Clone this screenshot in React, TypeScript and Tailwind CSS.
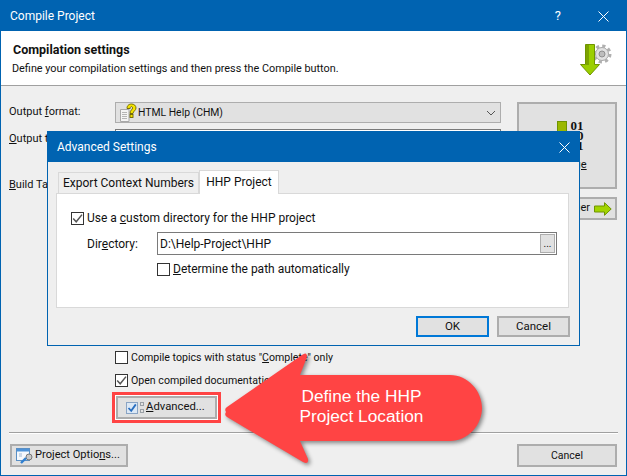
import React from 'react';

const Check = ({ checked = false }: { checked?: boolean }) => (
    <span className="flex h-[13px] w-[13px] shrink-0 items-center justify-center border border-[#333333] bg-white">
        {checked && (
            <svg width="11" height="11" viewBox="0 0 11 11">
                <path d="M1.2 5.6 L4.2 8.8 L10 1.6" fill="none" stroke="#555555" strokeWidth="1.5" />
            </svg>
        )}
    </span>
);

const Close = ({ size = 11 }: { size?: number }) => (
    <svg width={size} height={size} viewBox="0 0 11 11">
        <path d="M0.5 0.5 L10.5 10.5 M10.5 0.5 L0.5 10.5" stroke="#ffffff" strokeWidth="1" />
    </svg>
);

const HelpIcon = () => (
    <svg width="19" height="20" viewBox="0 0 19 20" className="shrink-0">
        <path d="M1.5 6.5 H10 V18.5 H1.5 Z" fill="#f4f4f4" stroke="#a8a8a8" />
        <path d="M3 9.5 H8 M3 11.5 H8 M3 13.5 H8 M3 15.5 H8" stroke="#b5b5b5" />
        <path d="M8 5.5 C8 2 10.5 1 12.5 1 C15 1 17 2.6 17 5 C17 7.6 14.2 8 14 10.5 H11 C11 7 13.6 6.6 13.6 5 C13.6 4 13 3.6 12.4 3.6 C11.6 3.6 11.2 4.4 11.2 5.5 Z" fill="#f5e400" stroke="#6b6200" strokeWidth="0.9" />
        <rect x="11" y="11.5" width="3" height="3" fill="#f5e400" stroke="#6b6200" strokeWidth="0.9" />
    </svg>
);

const CompileIcon = () => (
    <svg width="34" height="34" viewBox="0 0 34 34" className="shrink-0">
        <circle cx="22" cy="10" r="6.5" fill="#e2e2e2" stroke="#a6a6a6" strokeWidth="1" />
        <circle cx="22" cy="10" r="8" fill="none" stroke="#b0b0b0" strokeWidth="3" strokeDasharray="3.2 3.08" />
        <circle cx="22" cy="10" r="3" fill="#bdbdbd" stroke="#8f8f8f" strokeWidth="1" />
        <path d="M5.5 0.5 H14.5 V20.5 H19.5 L10 31 L0.5 20.5 H5.5 Z" fill="#9bcf00" stroke="#6f9400" strokeWidth="1" />
        <rect x="6" y="1" width="3" height="20" fill="#7ca300" />
    </svg>
);

const ArrowRight = () => (
    <svg width="18" height="14" viewBox="0 0 18 14" className="shrink-0">
        <path d="M0.5 4 H10.5 V0.7 L17.2 7 L10.5 13.3 V10 H0.5 Z" fill="#a2d400" stroke="#6f9400" />
    </svg>
);

const AdvancedIcon = () => (
    <svg width="20" height="14" viewBox="0 0 20 14" className="shrink-0">
        <rect x="0.5" y="1.5" width="11" height="11" fill="#dce8f5" stroke="#8aa4c4" />
        <path d="M2.5 7 L5.2 9.8 L9.8 3.4" fill="none" stroke="#2a6fc0" strokeWidth="1.8" />
        <rect x="14.5" y="1.5" width="3" height="3" fill="#e2e2e2" stroke="#9aa0a6" />
        <rect x="14.5" y="8.5" width="3" height="3" fill="#e2e2e2" stroke="#9aa0a6" />
    </svg>
);

const OptionsIcon = () => (
    <svg width="17" height="16" viewBox="0 0 17 16" className="shrink-0">
        <rect x="0.5" y="0.5" width="13" height="12" fill="#f5f8fc" stroke="#5a8fc4" />
        <rect x="1" y="1" width="12" height="2.5" fill="#4f93d8" />
        <path d="M3 6 H6 M3 8 H6" stroke="#9fb8d4" />
        <circle cx="13" cy="9" r="3" fill="#c8c8c8" stroke="#777777" />
        <path d="M5 15 L10 10" stroke="#2f7fd0" strokeWidth="2.4" />
    </svg>
);

const Button = ({ children, className = '' }: { children: React.ReactNode; className?: string }) => (
    <div className={`flex items-center border-2 border-[#adadad] bg-[#e1e1e1] whitespace-nowrap ${className}`}>
        {children}
    </div>
);

const App = () => {
    return (
        <div className="relative flex h-[476px] w-[627px] flex-col overflow-hidden border border-[#0063b1] bg-[#efefef] font-['Roboto',sans-serif] text-[11px] text-[#111111]">
            {/* title bar */}
            <div className="flex h-[30px] shrink-0 items-center bg-[#0063b1] pl-[9px] pr-[17px] text-[12px] text-white">
                <span>Compile Project</span>
                <span className="ml-auto mr-[37px] text-[13px]">?</span>
                <Close />
            </div>

            {/* header */}
            <div className="flex h-[55px] shrink-0 items-start justify-between border-b border-[#a0a0a0] bg-white pl-[12px] pr-[12px]">
                <div>
                    <div className="mt-[10px] text-[12.5px] font-bold leading-[18px]">Compilation settings</div>
                    <div className="-ml-px mt-px text-[10.85px] leading-[18px]">Define your compilation settings and then press the Compile button.</div>
                </div>
                <div className="mt-[13px]">
                    <CompileIcon />
                </div>
            </div>

            {/* form */}
            <div className="flex min-h-0 flex-1 gap-[16px] pl-[8px] pr-[9px] pt-[16px]">
                <div className="flex w-[492px] shrink-0 flex-col">
                    <div className="flex h-[21px] items-center">
                        <span className="w-[106px]">Output <u>f</u>ormat:</span>
                        <div className="flex h-[21px] flex-1 items-center border border-[#adadad] bg-[#e1e1e1] pl-[3px] pr-[3px]">
                            <HelpIcon />
                            <span className="pt-px text-[10.4px]">HTML Help (CHM)</span>
                            <svg width="10" height="6" viewBox="0 0 10 6" className="ml-auto mr-[1px]">
                                <path d="M1 1 L5 5 L9 1" fill="none" stroke="#555555" />
                            </svg>
                        </div>
                    </div>
                    <div className="mt-[6px] flex h-[21px] items-center">
                        <span className="w-[106px]"><u>O</u>utput to:</span>
                        <div className="h-[21px] flex-1 border border-[#7a7a7a] bg-white" />
                    </div>
                    <div className="mt-[25px] flex h-[21px] items-center">
                        <span className="w-[106px]"><u>B</u>uild Tags:</span>
                        <div className="h-[21px] flex-1 border border-[#7a7a7a] bg-white" />
                    </div>

                    <div className="ml-[106px] mt-[155px] flex items-center gap-[3px]">
                        <Check />
                        <span className="text-[10.6px] leading-[13px]">Compile topics with status "<u>C</u>omplete" only</span>
                    </div>
                    <div className="ml-[106px] mt-[10px] flex items-center gap-[3px]">
                        <Check checked />
                        <span className="text-[10.6px] leading-[13px]">Open compiled documentation after compilation</span>
                    </div>
                    <div className="ml-[103px] mt-[5px] h-[31px] w-[109px] border-[3px] border-[#ff4444] bg-white p-px">
                        <Button className="h-full w-full pl-[8px]">
                            <AdvancedIcon />
                            <span className="text-[11.3px]"><u>A</u>dvanced...</span>
                        </Button>
                    </div>
                </div>

                <div className="flex w-[100px] shrink-0 flex-col">
                    <div className="flex h-[87px] flex-col items-center border-2 border-[#adadad] bg-[#e1e1e1] pl-[6px] pt-[17px]">
                        <div className="flex gap-[4px]">
                            <div className="h-[28px] w-[10px] border border-[#6f9400] bg-[#9bb800]" />
                            <div className="font-['Liberation_Serif',serif] text-[13px] font-bold leading-[10px]">
                                01<br />10<br />01
                            </div>
                        </div>
                        <u className="mr-[4px] mt-[6px]">Change</u>
                    </div>
                    <Button className="mt-[8px] h-[23px] justify-end gap-[4px] pr-[3px]">
                        <span>Manager</span>
                        <ArrowRight />
                    </Button>
                </div>
            </div>

            {/* footer */}
            <div className="mx-[8px] shrink-0 border-t border-[#a0a0a0] pb-[8px] pt-[11px] shadow-[inset_0_1px_0_#ffffff]">
                <div className="flex justify-between pl-px pr-px">
                    <Button className="h-[23px] w-[118px] gap-[2px] pl-[4px]">
                        <OptionsIcon />
                        <span className="text-[11.1px]">Project Optio<u>n</u>s...</span>
                    </Button>
                    <Button className="h-[23px] w-[100px] justify-center text-[10.5px]">Cancel</Button>
                </div>
            </div>

            {/* Advanced Settings dialog */}
            <div className="absolute left-[46px] top-[130px] flex h-[215px] w-[533px] flex-col border border-[#0063b1] bg-[#efefef] text-[12px]">
                <div className="flex h-[30px] shrink-0 items-center justify-between bg-[#0063b1] pl-[9px] pr-[9px] text-white">
                    <span>Advanced Settings</span>
                    <Close />
                </div>
                <div className="flex h-[31px] shrink-0 items-end pl-[10px]">
                    <div className="flex h-[21px] w-[141px] items-center justify-center whitespace-nowrap border border-b-0 border-[#d9d9d9] bg-[#efefef]">Export Context Numbers</div>
                    <div className="relative z-10 -mb-px flex h-[24px] w-[80px] items-center justify-center whitespace-nowrap border border-b-0 border-[#d9d9d9] bg-white pb-[2px]">HHP Project</div>
                </div>
                <div className="ml-[8px] mr-[10px] flex h-[115px] shrink-0 flex-col border border-[#d9d9d9] bg-white pl-[14px] pr-[11px] pt-[18px]">
                    <div className="flex items-center gap-[3px]">
                        <Check checked />
                        <span className="leading-[13px]">Use a <u>c</u>ustom directory for the HHP project</span>
                    </div>
                    <div className="mt-[7px] flex h-[23px] items-center">
                        <span className="w-[86px] shrink-0 pl-[16px]">Dir<u>e</u>ctory:</span>
                        <div className="flex h-[23px] flex-1 items-center border border-[#7a7a7a] pl-[2px] pr-px">
                            <span>D:\Help-Project\HHP</span>
                            <div className="ml-auto flex h-[19px] w-[15px] items-center justify-center border border-[#adadad] bg-[#e1e1e1] text-[10px] leading-none">...</div>
                        </div>
                    </div>
                    <div className="ml-[86px] mt-[8px] flex items-center gap-[3px]">
                        <Check />
                        <span className="leading-[13px]"><u>D</u>etermine the path automatically</span>
                    </div>
                </div>
                <div className="mt-[8px] flex justify-end gap-[8px] pr-[9px] text-[11.5px]">
                    <div className="flex h-[21px] w-[73px] items-center justify-center border-2 border-[#0078d7] bg-[#e1e1e1]">OK</div>
                    <div className="flex h-[21px] w-[73px] items-center justify-center border-2 border-[#adadad] bg-[#e1e1e1]">Cancel</div>
                </div>
            </div>

            {/* callout arrow */}
            <div className="absolute left-[220px] top-[347px] h-[120px] w-[272px]">
                <svg width="272" height="120" viewBox="0 0 272 120" className="drop-shadow-[2px_2px_2px_rgba(0,0,0,0.45)]">
                    <path
                        d="M5 64 Q3 61 6 59 L81 7 Q86 3 86 9 L79 27 H229 C247 27 261 43 261 60 C261 77 247 93 229 93 L79 93 L87 111 Q88 117 82 114 L6 69 Q3 67 5 64 Z"
                        fill="#ff4444"
                    />
                </svg>
                <div className="absolute left-[59px] top-[39px] w-[163px] text-center font-['Liberation_Sans',sans-serif] text-[17.3px] leading-[19.5px] text-white">
                    Define the HHP<br />Project Location
                </div>
            </div>
        </div>
    );
};

export default App;
